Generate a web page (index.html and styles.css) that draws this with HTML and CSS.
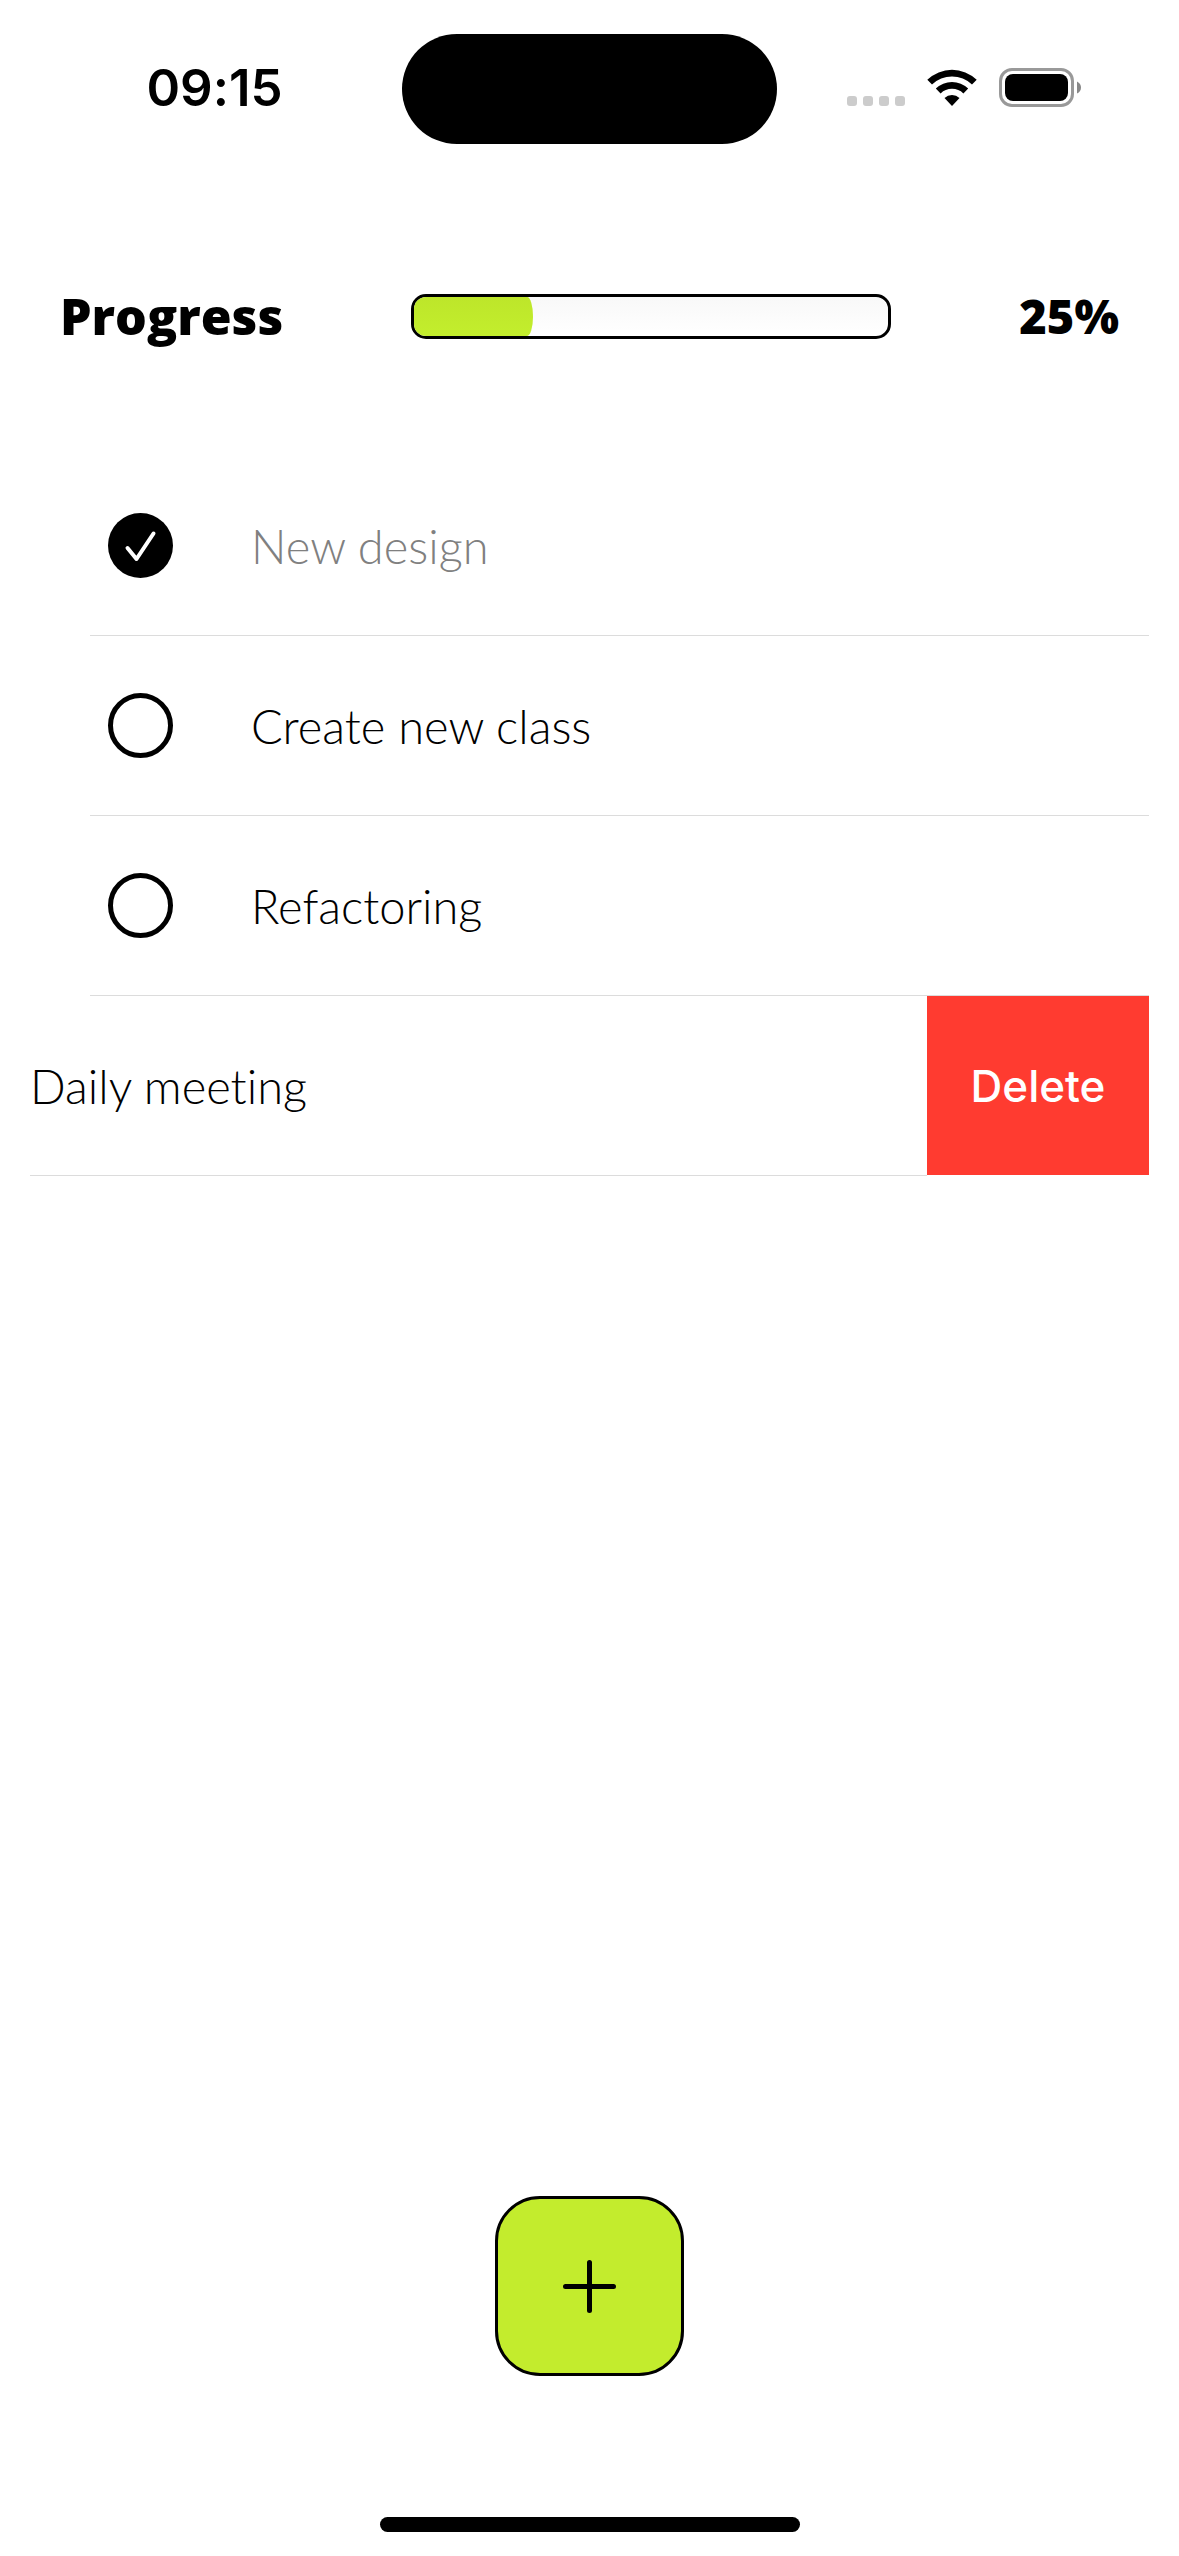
FILE: index.html
```html
<!DOCTYPE html>
<html lang="en">
<head>
<meta charset="utf-8">
<meta name="viewport" content="width=device-width, initial-scale=1">
<title>Tasks</title>
<link rel="stylesheet" href="styles.css">
</head>
<body>
<div class="screen">
  <header class="status-bar">
    <time class="clock">09:15</time>
    <div class="island"></div>
    <div class="indicators">
      <svg class="signal" viewBox="0 0 58 39" aria-hidden="true">
        <g fill="#ccc"><rect y="28" width="10" height="10" rx="3"/><rect x="16" y="28" width="10" height="10" rx="3"/><rect x="32" y="28" width="10" height="10" rx="3"/><rect x="48" y="28" width="10" height="10" rx="3"/></g>
      </svg>
      <svg class="wifi" viewBox="0 0 50 39" aria-hidden="true">
        <path d="M0.3 11.8A35.5 35.5 0 0 1 49.7 11.8L45 16.6A28.8 28.8 0 0 0 5 16.6Z"/>
        <path d="M8.8 20.6A23.3 23.3 0 0 1 41.2 20.6L36.4 25.4A16.5 16.5 0 0 0 13.6 25.4Z"/>
        <path d="M17.5 30A11 11 0 0 1 32.5 30L25 38Z"/>
      </svg>
      <svg class="battery" viewBox="0 0 82 39" aria-hidden="true">
        <rect x="1.5" y="1.5" width="72" height="36" rx="11.5" fill="none" stroke="#999" stroke-width="3"/>
        <rect x="6" y="6" width="63" height="27" rx="8"/>
        <path d="M78 13.500Q82 15.500 82 19.500T78 25.500Z" fill="#888"/>
      </svg>
    </div>
  </header>

  <main class="content">
    <section class="progress">
      <span class="progress-label" id="progress-label">Progress</span>
      <div class="track" role="progressbar" aria-labelledby="progress-label" aria-valuemin="0" aria-valuemax="100" aria-valuenow="25">
        <div class="fill" style="width: 25%"></div>
      </div>
      <span class="progress-value">25%</span>
    </section>

    <ul class="tasks">
      <li class="task">
        <div class="task-body">
          <input class="check" type="checkbox" id="task-1" checked>
          <label class="task-name" for="task-1">New design</label>
        </div>
      </li>
      <li class="task">
        <div class="task-body">
          <input class="check" type="checkbox" id="task-2">
          <label class="task-name" for="task-2">Create new class</label>
        </div>
      </li>
      <li class="task">
        <div class="task-body">
          <input class="check" type="checkbox" id="task-3">
          <label class="task-name" for="task-3">Refactoring</label>
        </div>
      </li>
      <li class="task swiped">
        <div class="task-body"><span class="task-name">Daily meeting</span></div>
        <button class="delete" type="button">Delete</button>
      </li>
    </ul>
  </main>

  <footer class="bottom">
    <button class="add" type="button" aria-label="Add task">
      <svg class="plus" viewBox="0 0 53 53" aria-hidden="true"><path d="M26.500 2.500V50.500M2.500 26.500H50.500" stroke="#000" stroke-width="5" stroke-linecap="round"/></svg>
    </button>
    <div class="home-indicator"></div>
  </footer>
</div>
</body>
</html>
```

FILE: styles.css
```css
*, *::before, *::after {
  box-sizing: border-box;
}

body {
  margin: 0;
  background: #fff;
  color: #000;
  font-family: Lato, "Open Sans", sans-serif;
  font-size: 47px;
  font-variant-ligatures: none;
  line-height: 60px;
}

button {
  padding: 0;
  color: inherit;
  font: inherit;
  cursor: pointer;
}

.screen {
  display: flex;
  flex-direction: column;
  min-height: 100vh;
}

/* Status bar */
.status-bar {
  display: grid;
  grid-template-columns: 1fr 375px 1fr;
  align-items: center;
  padding: 34px 0 33px;
}

.clock {
  padding: 0 0 3px 27px;
  text-align: center;
  font-family: Inter, sans-serif;
  font-size: 51px;
  font-weight: 600;
}

.island {
  height: 110px;
  border-radius: 55px;
  background: #000;
}

.indicators {
  display: flex;
  justify-content: flex-end;
  gap: 22px;
  padding: 0 98px 3px 0;
}

.signal { width: 58px; height: 39px; }
.wifi { width: 50px; height: 39px; }
.battery { width: 82px; height: 39px; }

/* Progress */
.content {
  flex: 1;
}

.progress {
  display: flex;
  align-items: center;
  justify-content: space-between;
  padding: 109px 60px 110px;
  font-family: "Open Sans", sans-serif;
  font-size: 50px;
  font-weight: 800;
}

.progress-value {
  font-size: 47px;
}

.track {
  width: 480px;
  height: 45px;
  overflow: hidden;
  border: 3px solid #000;
  border-radius: 15px;
  background: linear-gradient(#f8f8f8, #fff);
}

.fill {
  height: 100%;
  border-radius: 0 6px 6px 0 / 0 20px 20px 0;
  background: linear-gradient(#bde62a, #c3ee2d);
}

/* Task list */
.tasks {
  margin: 0;
  padding: 0 30px;
  list-style: none;
}

.task {
  display: flex;
  height: 180px;
  padding-left: 60px;
}

.task-body {
  display: flex;
  flex: 1;
  align-items: center;
  gap: 78px;
  padding-left: 18px;
  border-bottom: 1px solid #dcdcdc;
  font-weight: 300;
}

.swiped,
.swiped .task-body {
  padding-left: 0;
}

.check {
  flex: none;
  width: 65px;
  height: 65px;
  margin: 0;
  appearance: none;
  border: 5px solid #000;
  border-radius: 50%;
  background: #fff;
}

.check:checked {
  border: 0;
  background: #000 url("data:image/svg+xml,%3Csvg xmlns='http://www.w3.org/2000/svg' viewBox='0 0 65 65'%3E%3Cpath d='M19.500 35L28.500 46L45.500 20.500' fill='none' stroke='white' stroke-width='4' stroke-linecap='round' stroke-linejoin='round'/%3E%3C/svg%3E") center / contain;
}

.check:checked + .task-name {
  color: #808080;
}

.delete {
  width: 222px;
  margin-bottom: 1px;
  border: 0;
  background: #ff3b30;
  color: #fff;
  font-family: Inter, sans-serif;
  font-size: 44px;
  font-weight: 500;
}

/* Bottom */
.bottom {
  display: flex;
  flex-direction: column;
  align-items: center;
  gap: 141px;
  padding-bottom: 24px;
}

.add {
  display: grid;
  place-items: center;
  width: 189px;
  height: 180px;
  border: 3px solid #000;
  border-radius: 45px;
  background: #c3ec2d;
}

.plus {
  width: 53px;
  height: 53px;
}

.home-indicator {
  width: 420px;
  height: 15px;
  border-radius: 8px;
  background: #000;
}
```
